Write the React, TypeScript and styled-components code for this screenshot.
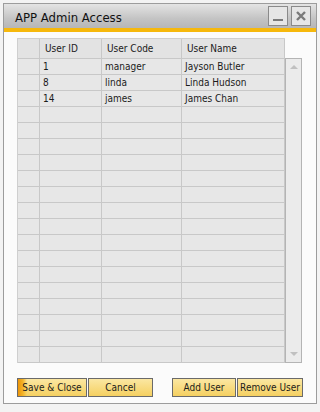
import React from 'react'
import styled, { createGlobalStyle } from 'styled-components'

const GlobalStyle = createGlobalStyle`
  html, body {
    margin: 0;
    padding: 0;
    background: #f3f3f3;
  }
  body {
    font-family: "DejaVu Sans Condensed", "Liberation Sans", sans-serif;
    font-size: 10px;
    color: #1b1b1b;
  }
`

const Page = styled.div`
  width: 320px;
  height: 412px;
  padding: 3px;
  box-sizing: border-box;
`

const Window = styled.div`
  width: 314px;
  height: 401px;
  box-sizing: border-box;
  border: 1px solid #9c9c9c;
  background: #fbfbfb;
  display: flex;
  flex-direction: column;
`

const TitleBar = styled.div`
  height: 24px;
  display: flex;
  align-items: center;
  justify-content: space-between;
  padding: 0 5px 0 11px;
  background: linear-gradient(#e4e4e4, #c4c4c4 60%, #b6b6b6);
  border-bottom: 4px solid #f6b80c;
`

const Title = styled.div`
  font-size: 13px;
  color: #111;
  padding-top: 2px;
`

const TitleButtons = styled.div`
  display: flex;
  gap: 3px;
  align-self: flex-start;
  margin-top: 2px;
`

const TitleButton = styled.div`
  width: 20px;
  height: 20px;
  box-sizing: border-box;
  border: 1px solid #8a8a8a;
  background: #e6e6e6;
  display: flex;
  align-items: center;
  justify-content: center;
`

const Body = styled.div`
  flex: 1;
  padding: 6px 0 6px 13px;
  display: flex;
  flex-direction: column;
`

const GridArea = styled.div`
  display: flex;
`

const Grid = styled.div`
  display: grid;
  grid-template-columns: 22px 62px 80px 103px;
  grid-auto-rows: 16px;
  grid-template-rows: 20px;
  border-left: 1px solid #cfcfcf;
  border-top: 1px solid #cfcfcf;
  background: #e6e6e6;
`

const Cell = styled.div<{ $head?: boolean }>`
  box-sizing: border-box;
  border-right: 1px solid #c8c8c8;
  border-bottom: 1px solid #c8c8c8;
  padding-left: ${(p) => (p.$head ? '5px' : '3px')};
  display: flex;
  align-items: center;
  white-space: nowrap;
  overflow: hidden;
  background: ${(p) => (p.$head ? '#e3e3e3' : '#e7e7e7')};
`

const Scroll = styled.div`
  width: 17px;
  margin-top: 20px;
  box-sizing: border-box;
  border: 1px solid #b4b4b4;
  background: #ebebeb;
  display: flex;
  flex-direction: column;
  justify-content: space-between;
`

const Arrow = styled.div`
  height: 16px;
  display: flex;
  align-items: center;
  justify-content: center;
`

const Buttons = styled.div`
  margin-top: auto;
  display: flex;
`

const Button = styled.div<{ $w: number; $focus?: boolean; $gap?: number }>`
  width: ${(p) => p.$w}px;
  height: 19px;
  box-sizing: border-box;
  margin-right: 1px;
  margin-left: ${(p) => p.$gap || 0}px;
  border: 1px solid #6a6a6a;
  display: flex;
  align-items: center;
  justify-content: center;
  white-space: nowrap;
  font-size: 10px;
  color: #1b1b1b;
  background: ${(p) =>
    p.$focus
      ? 'linear-gradient(90deg, #ec9408 0px, #f3b428 5px, rgba(246,208,96,0) 9px), linear-gradient(#fbe7a2, #f5d061)'
      : 'linear-gradient(#fbe7a2, #f5d061)'};
`

const users = [
  { id: '1', code: 'manager', name: 'Jayson Butler' },
  { id: '8', code: 'linda', name: 'Linda Hudson' },
  { id: '14', code: 'james', name: 'James Chan' }
]

const ROWS = 19

export default function App() {
  const rows = Array.from({ length: ROWS }, (_, i) => users[i] || null)
  return (
    <Page>
      <GlobalStyle />
      <Window>
        <TitleBar>
          <Title>APP Admin Access</Title>
          <TitleButtons>
            <TitleButton>
              <svg width="14" height="14" viewBox="0 0 14 14">
                <rect x="2" y="10" width="10" height="2" fill="#7a7a7a" />
              </svg>
            </TitleButton>
            <TitleButton>
              <svg width="14" height="14" viewBox="0 0 14 14">
                <path d="M3 3 L11 11 M11 3 L3 11" stroke="#7a7a7a" strokeWidth="2.4" />
              </svg>
            </TitleButton>
          </TitleButtons>
        </TitleBar>
        <Body>
          <GridArea>
            <Grid>
              <Cell $head />
              <Cell $head>User ID</Cell>
              <Cell $head>User Code</Cell>
              <Cell $head>User Name</Cell>
              {rows.map((r, i) => (
                <React.Fragment key={i}>
                  <Cell />
                  <Cell>{r ? r.id : ''}</Cell>
                  <Cell>{r ? r.code : ''}</Cell>
                  <Cell>{r ? r.name : ''}</Cell>
                </React.Fragment>
              ))}
            </Grid>
            <Scroll>
              <Arrow>
                <svg width="10" height="6" viewBox="0 0 10 6">
                  <path d="M1 5 L5 1 L9 5 Z" fill="#c0c0c0" />
                </svg>
              </Arrow>
              <Arrow>
                <svg width="10" height="6" viewBox="0 0 10 6">
                  <path d="M1 1 L5 5 L9 1 Z" fill="#c0c0c0" />
                </svg>
              </Arrow>
            </Scroll>
          </GridArea>
          <Buttons>
            <Button $w={70} $focus>Save &amp; Close</Button>
            <Button $w={65}>Cancel</Button>
            <Button $w={64} $gap={18}>Add User</Button>
            <Button $w={66}>Remove User</Button>
          </Buttons>
        </Body>
      </Window>
    </Page>
  )
}
